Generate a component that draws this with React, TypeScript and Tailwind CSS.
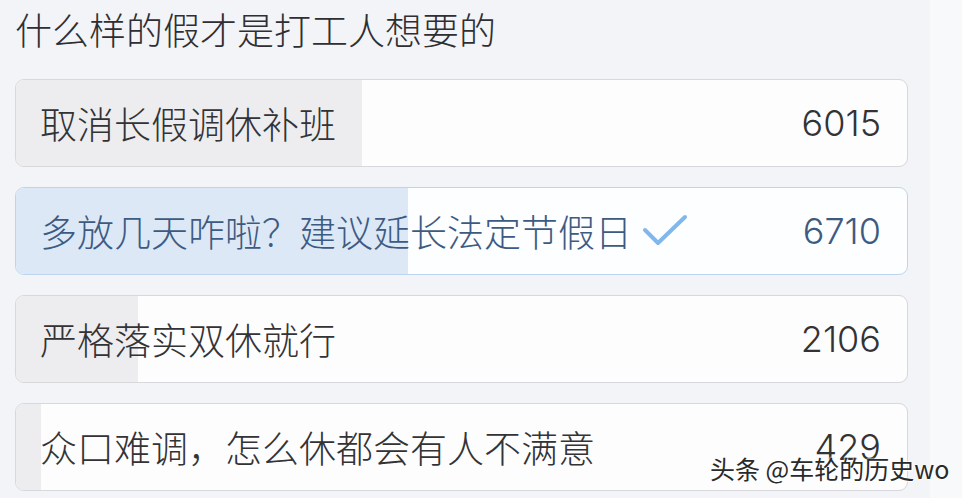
import React from "react";

const options = [
  { label: "取消长假调休补班", count: 6015, selected: false, fill: 346 },
  { label: "多放几天咋啦？建议延长法定节假日", count: 6710, selected: true, fill: 392 },
  { label: "严格落实双休就行", count: 2106, selected: false, fill: 122 },
  { label: "众口难调，怎么休都会有人不满意", count: 429, selected: false, fill: 25 },
];

function Check() {
  return (
    <svg width="46" height="34" viewBox="0 0 46 34" className="ml-[10px] shrink-0">
      <path
        d="M3 16 L16 29 L43 3"
        fill="none"
        stroke="#80b7ec"
        strokeWidth="4"
        strokeLinecap="round"
        strokeLinejoin="round"
      />
    </svg>
  );
}

export default function App() {
  return (
    <div className="relative flex w-[962px] h-[498px] overflow-hidden bg-[#f3f4f7] font-['Noto_Sans_CJK_SC',sans-serif]">
      <div className="w-[930px] shrink-0 pl-[15px] pr-[22px] pt-[11px]">
        <div className="text-[37px] leading-[37px] font-light text-[#2f2f33] whitespace-nowrap">
          什么样的假才是打工人想要的
        </div>
        <div className="mt-[31px] flex flex-col gap-[20px]">
          {options.map((o) => (
            <div
              key={o.label}
              className={`relative h-[88px] rounded-[9px] border overflow-hidden ${
                o.selected ? "border-[#bcd5ee] bg-[#fdfeff]" : "border-[#d7d7dc] bg-[#fdfdfe]"
              }`}
            >
              <div
                className={`absolute left-0 top-0 bottom-0 ${o.selected ? "bg-[#dce8f6]" : "bg-[#ededf0]"}`}
                style={{ width: `${o.fill}px` }}
              />
              <div className="relative flex h-full items-center justify-between pl-[24px] pr-[26px]">
                <div
                  className={`flex items-center text-[37px] leading-[37px] font-light whitespace-nowrap ${
                    o.selected ? "text-[#3d5b82]" : "text-[#333336]"
                  }`}
                >
                  <span>{o.label}</span>
                  {o.selected && <Check />}
                </div>
                <div
                  className={`font-['Inter',sans-serif] font-light text-[36px] leading-[36px] ${
                    o.selected ? "text-[#3d5b82]" : "text-[#333336]"
                  }`}
                >
                  {o.count}
                </div>
              </div>
            </div>
          ))}
        </div>
      </div>
      <div className="flex-1 bg-[#f8f9fb]" />
      <div className="absolute left-[710px] top-[454px] text-[25px] leading-[28px] text-[#2a2a2a] whitespace-nowrap [text-shadow:0_0_2px_#fff,0_0_2px_#fff,1px_1px_1px_#fff]">
        头条 @车轮的历史wo
      </div>
    </div>
  );
}
